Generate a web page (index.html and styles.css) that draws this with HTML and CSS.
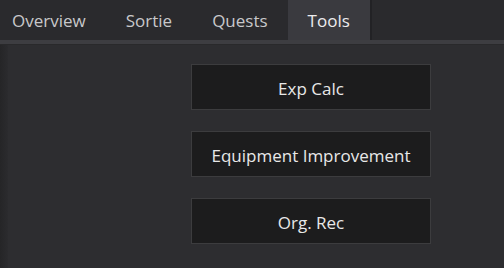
FILE: index.html
```html
<!DOCTYPE html>
<html>
<head>
<meta charset="utf-8">
<link rel="stylesheet" href="styles.css">
</head>
<body>
<div class="app">
  <nav class="tabs">
    <div class="tab">Overview</div>
    <div class="tab">Sortie</div>
    <div class="tab">Quests</div>
    <div class="tab active">Tools</div>
  </nav>
  <div class="divider"></div>
  <main class="content">
    <div class="edge"></div>
    <div class="tools">
      <button class="tool-btn">Exp Calc</button>
      <button class="tool-btn">Equipment Improvement</button>
      <button class="tool-btn">Org. Rec</button>
    </div>
  </main>
</div>
</body>
</html>
```

FILE: styles.css
```css
* { box-sizing: border-box; }
html, body {
  margin: 0;
  padding: 0;
  width: 504px;
  height: 268px;
  overflow: hidden;
  background: #2d2d30;
  font-family: "Open Sans", "Noto Sans", sans-serif;
}
.app {
  display: flex;
  flex-direction: column;
  height: 268px;
}
.tabs {
  display: flex;
  height: 40px;
  background: #2a2a2d;
  margin-left: -8px;
}
.tab {
  display: flex;
  align-items: center;
  padding: 1px 20px 0;
  height: 40px;
  font-size: 17px;
  color: #c8c8ca;
}
.tab.active {
  background: #3a3a3f;
  color: #ececee;
  border-right: 2px solid #222225;
}
.divider {
  height: 5px;
  background: #3d3d41;
  border-bottom: 1px solid #29292b;
}
.content {
  flex: 1;
  display: flex;
  background: #2d2d30;
}
.edge {
  width: 8px;
  background: linear-gradient(to right, #252527, #2b2b2e);
}
.tools {
  display: flex;
  flex-direction: column;
  gap: 21px;
  padding-top: 19px;
  padding-left: 183px;
}
.tool-btn {
  width: 240px;
  height: 46px;
  background: #1c1c1d;
  border: 1px solid #3c3c3e;
  color: #e8e8e8;
  font-family: "Open Sans", "Noto Sans", sans-serif;
  font-size: 17px;
  padding: 2px 0 0;
}
```
